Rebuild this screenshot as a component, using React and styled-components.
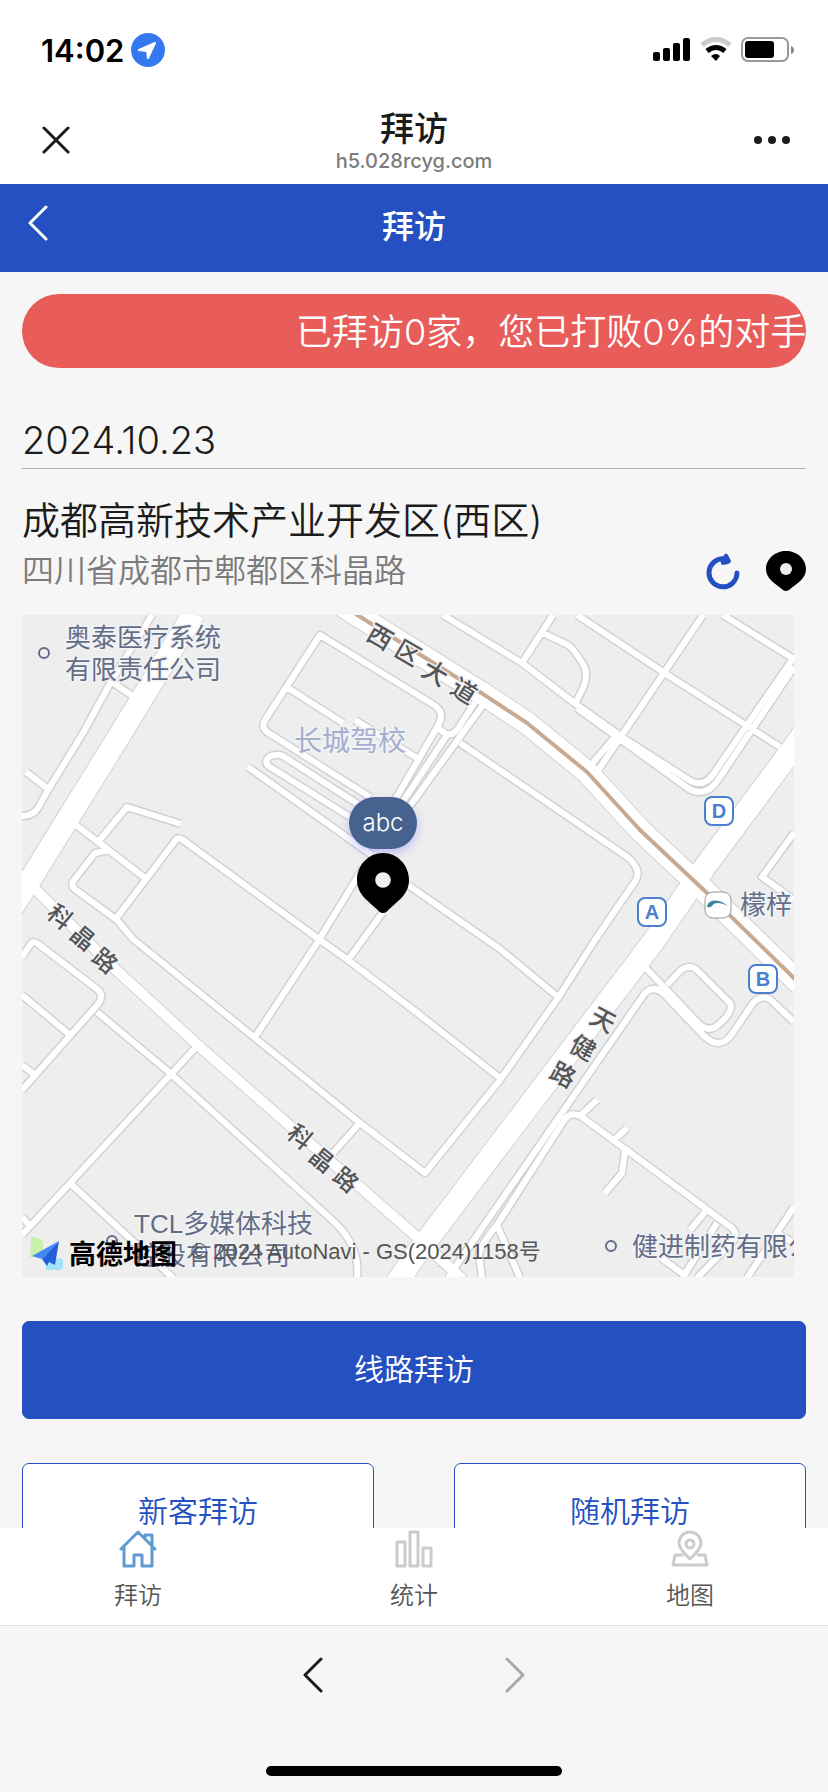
import styled, { createGlobalStyle } from 'styled-components'

const palette = {
	blue: '#2450c1',
	red: '#e85d5a',
	page: '#f6f6f6',
	white: '#ffffff',
	black: '#000000',
	text: '#1c1c1c',
	grey: '#7b7b7b',
	label: '#646d86',
	badge: '#4a80ce',
}

const minorRoads = [
	'M152 615L112 680L83 733L48 790L38 808Q33 816 22 816',
	'M26 772L47 788M112 682L134 697M72 822L145 878',
	'M181 824L127 807L98 842',
	'M110 850L95 853L74 880Q70 886 76 890L117 920L133 939L255 1038L360 1123L425 1173L500 1080L558 998L595 940L636 880Q640 872 634 864Q630 858 620 852L460 743',
	'M115 920L175 841Q178 836 183 840L320 940L348 960L420 1015L500 1078',
	'M255 1037L317 943L363 868M348 960L383 912',
	'M408 885L500 949L558 997',
	'M370 797L267 732Q261 727 265 720L320 635L434 705Q445 712 439 724L395 800',
	'M288 688L343 723M355 720L417 758M248 767L372 855',
	'M350 817L270 767Q263 763 269 757Q275 753 283 756L370 812',
	'M475 702L459 727Q454 736 446 734L438 728M483 705L410 806M447 735L402 803',
	'M443 615L522 663L577 705L622 737L689 780Q702 788 712 776L794 657',
	'M577 708L689 789Q706 798 718 780L794 667',
	'M553 615L522 663M543 633L568 645Q573 648 583 664Q589 674 583 688L576 702',
	'M577 615L663 672L780 747M703 615L622 735L597 772M615 737L590 766M723 615L794 659',
	'M794 833L762 877L794 900',
	'M645 967L699 1024Q709 1033 718 1025Q738 1008 727 1000L697 970Q690 964 681 970L667 985',
	'M448 1278L460 1260L645 993Q654 985 663 993L704 1036Q720 1051 732 1034L753 1003Q764 992 774 1003L794 1022',
	'M482 1278L479 1254Q480 1246 497 1225L563 1122Q570 1110 582 1117L732 1228Q738 1234 734 1240L697 1278',
	'M597 1100L581 1115M627 1128L613 1141M625 1150L622 1173L605 1193M705 1212L690 1230M717 1223L683 1277',
	'M497 1225L520 1278M660 1257L687 1277M440 1262L465 1280M794 1207L747 1278M777 1233L794 1243',
	'M22 957L30 945Q33 940 38 944L97 989Q104 994 99 1003L22 1090',
	'M22 995L70 1035M22 1065L35 1075M97 1012L170 1073L330 1218Q361 1245 357 1278',
	'M198 1045L22 1235M72 1185L173 1278M22 1217L30 1226M358 1125L333 1153',
]

const mainRoad = 'M28 882L113 967L200 1047L417 1237L462 1279'
const avenue = 'M340 604L400 642L480 692L527 723L587 772L640 830L707 893L800 984'
const wideRoads = [
	'M194 613L121 733L30 880L12 908',
	'M820 710L794 747L704 868L653 942L543 1087L415 1256L396 1284',
	avenue,
]

const streetNames = [
	{ size: 25, chars: [['西', 380, 637, 30], ['区', 408, 653, 30], ['大', 435, 673, 30], ['道', 464, 691, 32]] },
	{ size: 24, chars: [['科', 60, 917, 40], ['晶', 83, 938, 40], ['路', 105, 961, 40]] },
	{ size: 24, chars: [['科', 300, 1137, 40], ['晶', 322, 1160, 40], ['路', 346, 1180, 40]] },
	{ size: 25, chars: [['天', 603, 1020, 28], ['健', 583, 1048, 28], ['路', 563, 1075, 28]] },
]

const exits = [
	['D', 719, 811],
	['A', 652, 912],
	['B', 763, 979],
]

const tabs = [
	{ label: '拜访', Icon: HomeIcon },
	{ label: '统计', Icon: ChartIcon },
	{ label: '地图', Icon: MapIcon },
]

function App() {
	return (
		<Screen>
			<GlobalStyle />
			<StatusBar>
				<Clock>
					14:02
					<LocationIcon />
				</Clock>
				<StatusIcons />
			</StatusBar>

			<BrowserBar>
				<IconButton aria-label='关闭'>
					<svg width='32' height='28' viewBox='0 0 32 28' fill='none' stroke={palette.text} strokeWidth='3' strokeLinecap='round'>
						<path d='M4 2L28 26M28 2L4 26' />
					</svg>
				</IconButton>
				<BrowserTitle>
					<strong>拜访</strong>
					<span>h5.028rcyg.com</span>
				</BrowserTitle>
				<IconButton aria-label='更多'>
					<svg width='36' height='28' viewBox='0 0 36 28' fill={palette.text}>
						<circle cx='4' cy='14' r='4' />
						<circle cx='18' cy='14' r='4' />
						<circle cx='32' cy='14' r='4' />
					</svg>
				</IconButton>
			</BrowserBar>

			<Header>
				<IconButton aria-label='返回'>
					<Chevron color={palette.white} />
				</IconButton>
				<h1>拜访</h1>
			</Header>

			<Content>
				<Notice>
					<p>已拜访0家，您已打败0%的对手</p>
				</Notice>

				<VisitDate>2024.10.23</VisitDate>
				<Place>成都高新技术产业开发区(西区)</Place>
				<AddressRow>
					<Address>四川省成都市郫都区科晶路</Address>
					<IconButton aria-label='刷新'>
						<RefreshIcon />
					</IconButton>
					<IconButton aria-label='定位'>
						<PinIcon width='40' height='40' />
					</IconButton>
				</AddressRow>

				<MapBox>
					<StreetMap />
					<Marker>
						<Bubble>abc</Bubble>
						<PinIcon width='52' height='60' holeHeight={5.2} />
					</Marker>
				</MapBox>

				<Button $primary>线路拜访</Button>
				<ButtonRow>
					<Button>新客拜访</Button>
					<Button>随机拜访</Button>
				</ButtonRow>
			</Content>

			<TabBar>
				{tabs.map(({ label, Icon }) => (
					<Tab key={label}>
						<Icon />
						{label}
					</Tab>
				))}
			</TabBar>

			<Toolbar>
				<Arrows>
					<IconButton aria-label='后退'>
						<Chevron color={palette.text} />
					</IconButton>
					<IconButton aria-label='前进'>
						<Chevron color='#a8a8a8' isForward />
					</IconButton>
				</Arrows>
				<HomeIndicator />
			</Toolbar>
		</Screen>
	)
}

export default App

function StreetMap() {
	return (
		<MapSvg viewBox='22 615 772 662' preserveAspectRatio='xMidYMid slice'>
			<g fill='none' strokeLinejoin='round'>
				<g stroke='#d2d2d2'>
					<path d={minorRoads.join('')} strokeWidth='9' />
					<path d={mainRoad} strokeWidth='12' />
					<path d={wideRoads.join('')} strokeWidth='24' />
				</g>
				<g stroke={palette.white}>
					<path d={minorRoads.join('')} strokeWidth='6' />
					<path d={mainRoad} strokeWidth='10' />
					<path d={wideRoads.join('')} strokeWidth='22' />
				</g>
				<path d={avenue} stroke='#c8aa92' strokeWidth='4' />
			</g>

			<MapText $size={26}>
				<text x='65' y='647'>奥泰医疗系统</text>
				<text x='65' y='679'>有限责任公司</text>
				<text x='134' y='1233'>TCL多媒体科技</text>
				<text x='134' y='1265'>控股有限公司</text>
				<text x='632' y='1256'>健进制药有限公司</text>
				<text x='740' y='914'>檬梓</text>
			</MapText>
			<MapText $size={28} $color='#a6aecd'>
				<text x='294' y='751'>长城驾校</text>
			</MapText>
			{streetNames.map(({ size, chars }, index) => (
				<MapText key={index} $size={size} $color='#555555' $centered>
					{chars.map(([char, x, y, angle]) => (
						<text key={char} transform={`translate(${x} ${y}) rotate(${angle})`}>
							{char}
						</text>
					))}
				</MapText>
			))}

			<g fill='#eeeeee' stroke={palette.label} strokeWidth='2'>
				<circle cx='44' cy='653' r='5' />
				<circle cx='112' cy='1241' r='5' />
				<circle cx='611' cy='1246' r='5' />
			</g>

			{exits.map(([name, x, y]) => (
				<g key={name}>
					<rect x={x - 14} y={y - 14} width='28' height='28' rx='7' fill={palette.white} stroke={palette.badge} strokeWidth='2' />
					<ExitName x={x} y={y + 7}>
						{name}
					</ExitName>
				</g>
			))}
			<rect x='705' y='892' width='26' height='26' rx='8' fill={palette.white} stroke='#999999' />
			<path d='M707 907C708 899 718 898 728 906C720 902 714 902 712 906Q710 908 707 907Z' fill='#3d83a3' />

			<path d='M31 1238Q30 1237 34 1237L43 1240V1253L30 1258Z' fill='#c9efac' />
			<path d='M46 1263L60 1258Q63 1258 63 1263V1267Q63 1270 58 1270L46 1270Z' fill='#a5e3fa' />
			<path d='M59 1241L32 1256L42 1259Z' fill='#3f8af7' />
			<path d='M59 1241L42 1259L47 1266L49 1262L55 1265Z' fill='#2460d8' />
			<Brand x='69' y='1264'>高德地图</Brand>
			<Copyright x='191' y='1259'>© 2024 AutoNavi - GS(2024)1158号</Copyright>
		</MapSvg>
	)
}

function LocationIcon() {
	return (
		<svg width='34' height='34' viewBox='0 0 34 34'>
			<circle cx='17' cy='17' r='17' fill='#3579f0' />
			<path d='M24 10L8 17L16 18L17 25Z' fill='white' stroke='white' strokeWidth='2' strokeLinejoin='round' />
		</svg>
	)
}

function StatusIcons() {
	return (
		<svg width='142' height='26' viewBox='0 0 142 26'>
			<rect x='0' y='15' width='7' height='9' rx='2' />
			<rect x='10' y='11' width='7' height='13' rx='2' />
			<rect x='20' y='6' width='7' height='18' rx='2' />
			<rect x='30' y='1' width='7' height='23' rx='2' />
			<path d='M49 8Q63 -3 77 8' fill='none' stroke='#cccccc' strokeWidth='5' />
			<path d='M54 14Q63 7 72 14' fill='none' stroke='black' strokeWidth='5' />
			<path d='M58 19Q63 15 67 19L63 24Z' />
			<rect x='89' y='1' width='46' height='23' rx='6' fill='none' stroke='#999999' strokeWidth='2' />
			<rect x='92' y='4' width='29' height='17' rx='3' />
			<path d='M138 9Q141 10 141 13Q141 16 138 17Z' fill='#888888' />
		</svg>
	)
}

function Chevron({ color, isForward }) {
	return (
		<svg width='20' height='36' viewBox='0 0 20 36' fill='none' stroke={color} strokeWidth='3' strokeLinecap='round' strokeLinejoin='round'>
			<path d={isForward ? 'M2 2L18 18L2 34' : 'M18 2L2 18L18 34'} />
		</svg>
	)
}

function PinIcon({ width, height, holeHeight = 6 }) {
	return (
		<svg width={width} height={height} viewBox='0 0 40 40' preserveAspectRatio='none'>
			<path d='M20 0C9 0 0 8 0 18C0 28 9 32 17 39Q20 41 23 39C31 32 40 28 40 18C40 8 31 0 20 0Z' />
			<ellipse cx='20' cy='18' rx='6' ry={holeHeight} fill='#eeeeee' />
		</svg>
	)
}

function RefreshIcon() {
	return (
		<svg width='34' height='38' viewBox='0 0 34 38'>
			<path d='M19 7A14 14 0 1 0 31 21' fill='none' stroke={palette.blue} strokeWidth='5' strokeLinecap='round' />
			<path d='M18 3Q20 0 22 3L25 9Q25 11 22 12L17 13Q14 12 15 9Z' fill={palette.blue} />
		</svg>
	)
}

function HomeIcon() {
	return (
		<svg width='38' height='38' viewBox='0 0 38 38' fill='none' stroke='#5f9ad0' strokeWidth='3' strokeLinejoin='round' strokeLinecap='round'>
			<path d='M2 19L19 2L36 19M5 17V36H15V25H23V36H33V17M26 8V5H33V15' />
		</svg>
	)
}

function ChartIcon() {
	return (
		<svg width='38' height='38' viewBox='0 0 38 38' fill='none' stroke='#cccccc' strokeWidth='3' strokeLinejoin='round'>
			<path d='M2 12H10V36H2ZM15 2H23V36H15ZM28 18H36V36H28Z' />
		</svg>
	)
}

function MapIcon() {
	return (
		<svg width='38' height='38' viewBox='0 0 38 38' fill='none' stroke='#cccccc' strokeWidth='3' strokeLinejoin='round' strokeLinecap='round'>
			<path d='M19 29Q8 19 8 13A11 11 0 0 1 30 13Q30 19 19 29Z' />
			<circle cx='19' cy='14' r='4' />
			<path d='M11 25H4L2 35H36L34 25H27' />
		</svg>
	)
}

const GlobalStyle = createGlobalStyle`
	* {
		box-sizing: border-box;
	}

	body,
	h1,
	h2,
	p {
		margin: 0;
	}

	body,
	button {
		font-family: Inter, 'Noto Sans CJK SC', sans-serif;
	}

	svg {
		display: block;
	}
`
const Screen = styled.div`
	height: 100vh;
	display: flex;
	flex-direction: column;
	background-color: ${palette.page};
	color: ${palette.text};
`
const StatusBar = styled.div`
	flex-shrink: 0;
	height: 100px;
	padding: 0 33px 0 41px;
	display: flex;
	justify-content: space-between;
	align-items: center;
	background-color: ${palette.white};
`
const Clock = styled.div`
	display: flex;
	align-items: center;
	gap: 7px;
	font-size: 31px;
	font-weight: 600;
	color: ${palette.black};
`
const IconButton = styled.button`
	flex-shrink: 0;
	padding: 0;
	border: 0;
	background: none;
	cursor: pointer;
`
const BrowserBar = styled.div`
	flex-shrink: 0;
	height: 84px;
	padding: 0 38px 4px;
	display: grid;
	grid-template-columns: 36px 1fr 36px;
	align-items: center;
	justify-items: center;
	background-color: ${palette.white};
`
const BrowserTitle = styled.div`
	display: flex;
	flex-direction: column;
	align-items: center;

	strong {
		font-size: 34px;
		line-height: 42px;
		font-weight: 500;
	}

	span {
		font-size: 20px;
		line-height: 22px;
		font-weight: 500;
		color: ${palette.grey};
	}
`
const Header = styled.header`
	flex-shrink: 0;
	height: 88px;
	padding: 0 28px 10px;
	display: grid;
	grid-template-columns: 20px 1fr 20px;
	align-items: center;
	background-color: ${palette.blue};
	color: ${palette.white};

	h1 {
		padding-top: 8px;
		font-size: 32px;
		line-height: 40px;
		font-weight: 500;
		text-align: center;
	}
`
const Content = styled.main`
	flex: 1;
	min-height: 0;
	padding: 22px 22px 0;
	overflow: hidden;
`
const Notice = styled.div`
	height: 74px;
	padding-left: 274px;
	border-radius: 37px;
	background-color: ${palette.red};
	color: ${palette.white};
	overflow: hidden;

	p {
		font-size: 36px;
		line-height: 76px;
		font-weight: 350;
		white-space: nowrap;
	}
`
const VisitDate = styled.p`
	margin-top: 48px;
	padding-bottom: 4px;
	border-bottom: 1px solid #a9afa9;
	font-size: 38px;
	line-height: 48px;
	font-weight: 350;
`
const Place = styled.h2`
	margin-top: 24px;
	font-size: 38px;
	line-height: 54px;
	font-weight: 350;
`
const AddressRow = styled.div`
	height: 48px;
	display: flex;
	align-items: center;
	gap: 26px;
`
const Address = styled.p`
	flex: 1;
	font-size: 32px;
	line-height: 48px;
	font-weight: 350;
	color: ${palette.grey};
`
const MapBox = styled.div`
	height: 662px;
	margin: 20px 12px 44px 0;
	position: relative;
	background-color: #eeeeee;
	overflow: hidden;
`
const MapSvg = styled.svg`
	width: 100%;
	height: 100%;
`
const MapText = styled.g`
	font-family: 'Liberation Sans', 'Noto Sans CJK SC', sans-serif;
	font-size: ${({ $size }) => $size}px;
	font-weight: ${({ $centered }) => ($centered ? 500 : 400)};
	fill: ${({ $color }) => $color || palette.label};
	stroke: #f2f3f6;
	stroke-width: 3px;
	paint-order: stroke;
	text-anchor: ${({ $centered }) => ($centered ? 'middle' : 'start')};
	dominant-baseline: ${({ $centered }) => ($centered ? 'central' : 'auto')};
`
const ExitName = styled.text`
	font-family: 'Liberation Sans', sans-serif;
	font-size: 20px;
	font-weight: 700;
	fill: ${palette.badge};
	text-anchor: middle;
`
const Brand = styled.text`
	font-size: 27px;
	font-weight: 700;
	fill: ${palette.black};
`
const Copyright = styled.text`
	font-family: 'Liberation Sans', 'Noto Sans CJK SC', sans-serif;
	font-size: 22px;
	fill: #555555;
`
const Marker = styled.div`
	position: absolute;
	top: 182px;
	left: 361px;
	transform: translateX(-50%);
	display: flex;
	flex-direction: column;
	align-items: center;
	gap: 4px;
`
const Bubble = styled.div`
	width: 68px;
	border-radius: 26px;
	background-color: #46628f;
	box-shadow: 0 4px 10px rgba(80, 80, 255, 0.3);
	color: ${palette.white};
	font-size: 24px;
	line-height: 52px;
	font-weight: 350;
	text-align: center;
`
const Button = styled.button`
	width: 100%;
	height: 98px;
	padding: 0 0 6px;
	border: 1px solid ${palette.blue};
	border-radius: 7px;
	background-color: ${({ $primary }) => ($primary ? palette.blue : palette.white)};
	color: ${({ $primary }) => ($primary ? palette.white : palette.blue)};
	font-size: 30px;
	font-weight: 350;
	cursor: pointer;
`
const ButtonRow = styled.div`
	margin-top: 44px;
	display: flex;
	gap: 80px;
`
const TabBar = styled.nav`
	flex-shrink: 0;
	height: 98px;
	display: flex;
	border-bottom: 1px solid #e0e0e0;
	background-color: ${palette.white};
`
const Tab = styled.button`
	flex: 1;
	padding: 2px 0 0;
	border: 0;
	background: none;
	display: flex;
	flex-direction: column;
	align-items: center;
	gap: 12px;
	color: #555555;
	font-size: 24px;
	line-height: 32px;
	font-weight: 350;
	cursor: pointer;
`
const Toolbar = styled.footer`
	flex-shrink: 0;
	height: 166px;
	padding: 31px 0 16px;
	display: flex;
	flex-direction: column;
	justify-content: space-between;
	align-items: center;
`
const Arrows = styled.div`
	display: flex;
	gap: 182px;
`
const HomeIndicator = styled.div`
	width: 296px;
	height: 10px;
	border-radius: 5px;
	background-color: ${palette.black};
`
